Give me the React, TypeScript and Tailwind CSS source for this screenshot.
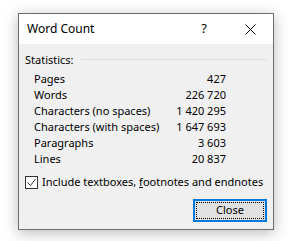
import React from 'react';

const stats: [string, string][] = [
    ['Pages', '427'],
    ['Words', '226 720'],
    ['Characters (no spaces)', '1 420 295'],
    ['Characters (with spaces)', '1 647 693'],
    ['Paragraphs', '3 603'],
    ['Lines', '20 837'],
];

export default function App() {
    return (
        <div className="w-[291px] h-[241px] bg-white pt-[13px] pl-[18px] font-['Noto_Sans',sans-serif] text-[11px] text-black whitespace-nowrap">
            <div className="w-[256px] h-[217px] border border-[#6e6e6e] bg-[#f0f0f0] shadow-[0_3px_14px_rgba(0,0,0,0.28)] flex flex-col">
                {/* title bar */}
                <div className="h-[30px] bg-white flex items-center shrink-0">
                    <span className="pl-[8px] text-[12px] leading-none flex-1">Word Count</span>
                    <div className="w-[46px] h-full flex items-center justify-center text-[13px]">?</div>
                    <div className="w-[46px] h-full flex items-center justify-center">
                        <svg width="11" height="11" viewBox="0 0 11 11">
                            <path d="M0.5 0.5 L10.5 10.5 M10.5 0.5 L0.5 10.5" stroke="#000" strokeWidth="1" />
                        </svg>
                    </div>
                </div>

                <div className="flex flex-col pt-[7px] px-[6px]">
                    <div className="flex items-center h-[16px]">
                        <span className="leading-none">Statistics:</span>
                        <div className="flex-1 h-px bg-[#dcdcdc] ml-[7px]" />
                    </div>
                    <div className="flex flex-col pl-[9px] w-[201px] mt-[4px]">
                        {stats.map(([label, value]) => (
                            <div key={label} className="flex justify-between items-center h-[16px]">
                                <span>{label}</span>
                                <span className="whitespace-pre">{value}</span>
                            </div>
                        ))}
                    </div>
                    <div className="flex items-center mt-[8px] h-[14px]">
                        <div className="w-[13px] h-[13px] border border-[#333] bg-white flex items-center justify-center">
                            <svg width="11" height="11" viewBox="0 0 11 11">
                                <path d="M1.5 5.5 L4.5 8.5 L9.5 2" fill="none" stroke="#333" strokeWidth="1" />
                            </svg>
                        </div>
                        <span className="ml-[4px]">
                            Include textboxes, <span className="underline">f</span>ootnotes and endnotes
                        </span>
                    </div>
                    <div className="flex justify-end mt-[10px]">
                        <button className="w-[74px] h-[23px] border-2 border-[#0078d7] bg-[#e1e1e1] p-px">
                            <div className="w-full h-full border border-dotted border-black flex items-center justify-center">
                                Close
                            </div>
                        </button>
                    </div>
                </div>
            </div>
        </div>
    );
}
